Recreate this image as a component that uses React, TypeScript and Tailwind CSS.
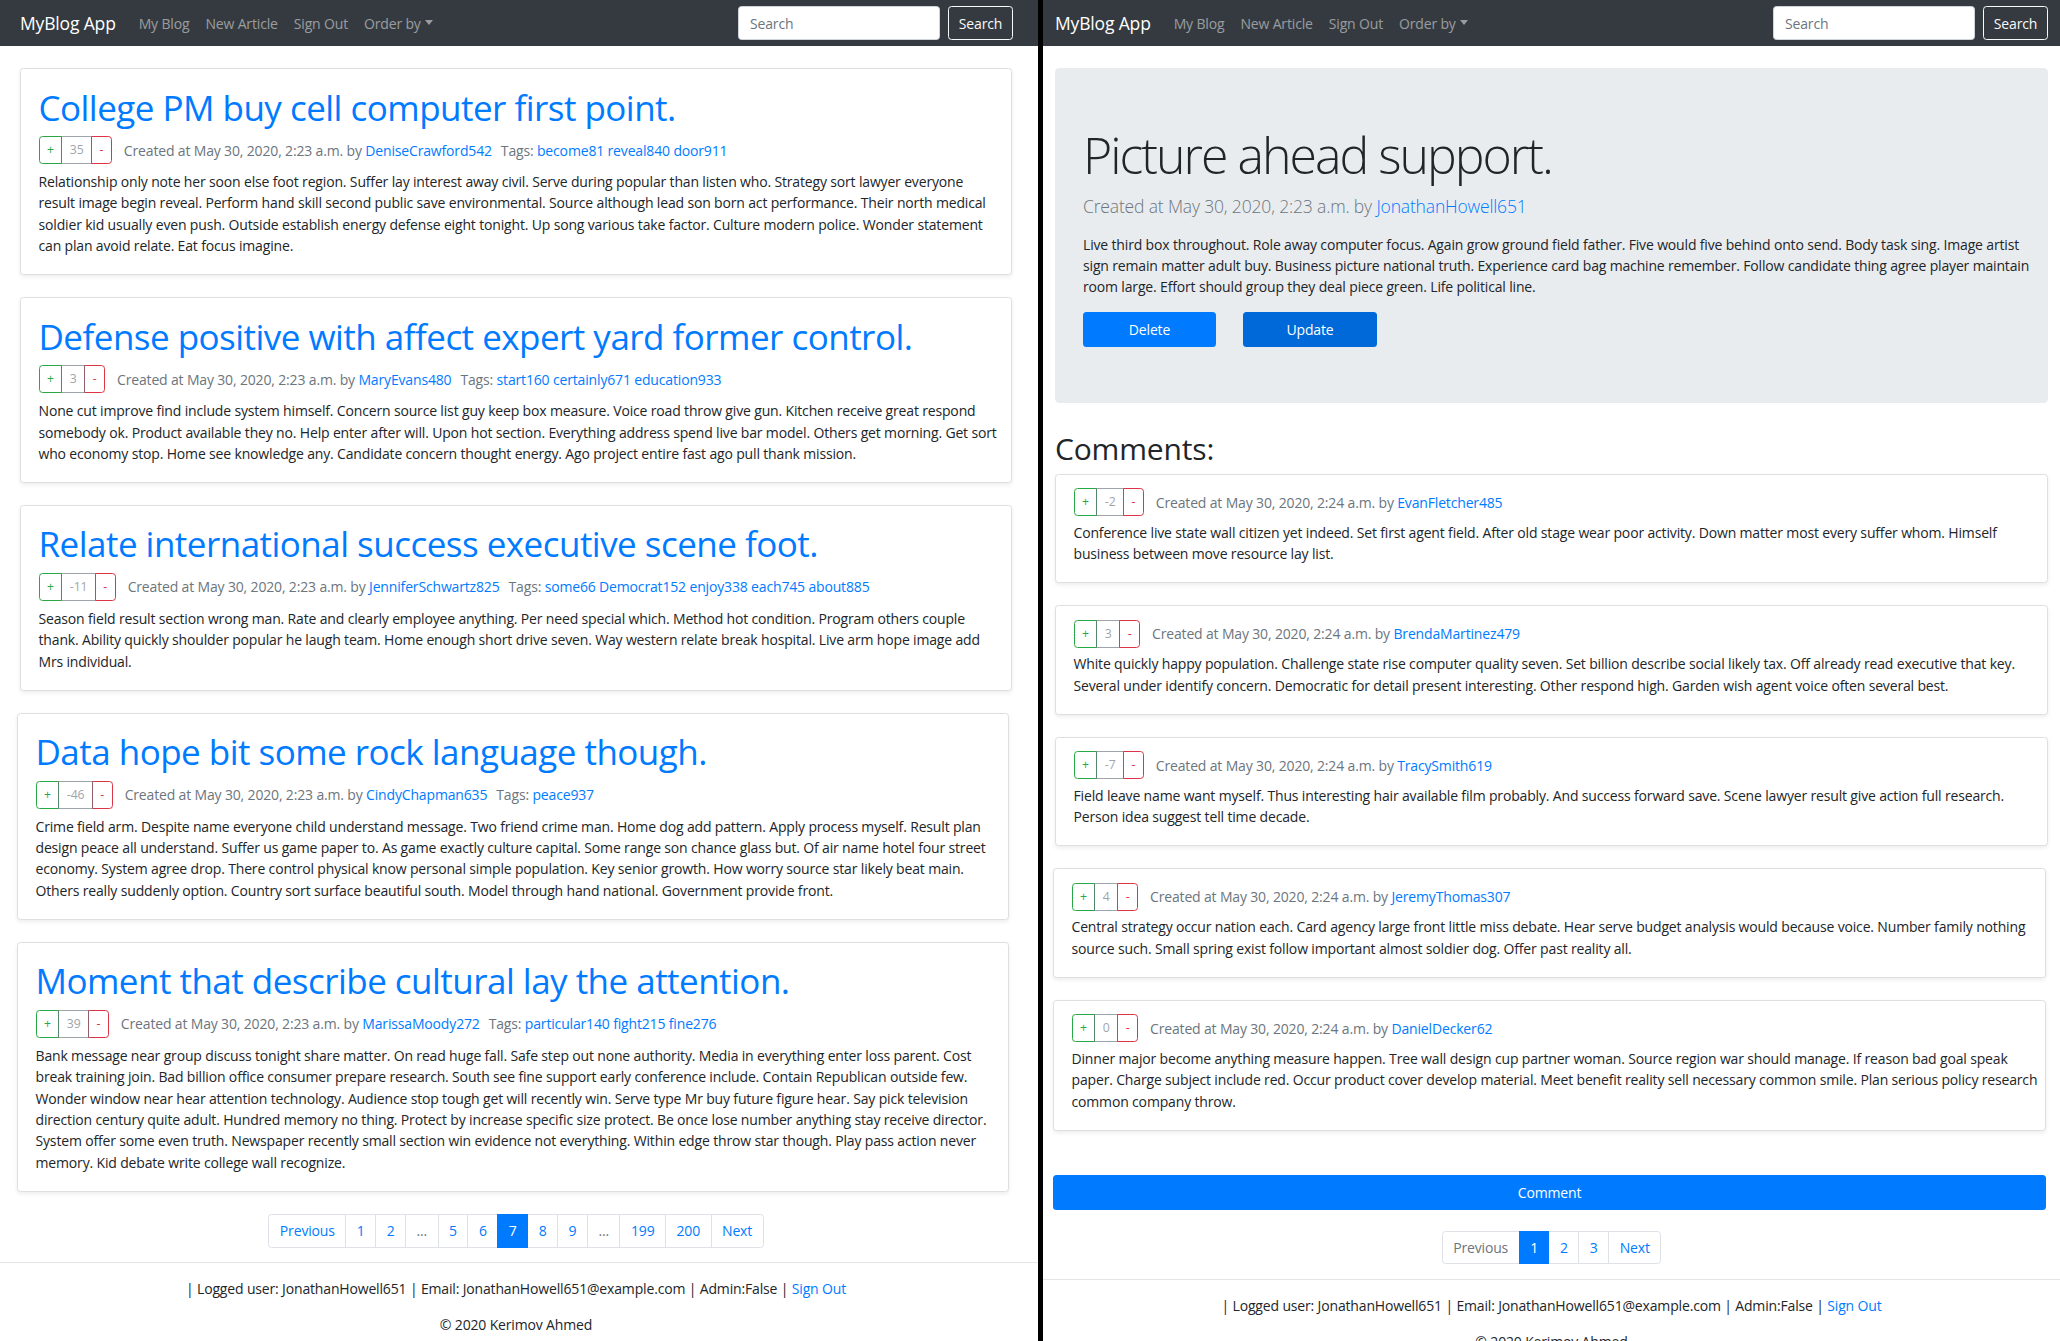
import React from "react";

type Article = {
  title: string;
  votes: string;
  author: string;
  tags: string[];
  lines: string[];
  shift?: boolean;
};

const articles: Article[] = [
  {
    title: "College PM buy cell computer first point.",
    votes: "35",
    author: "DeniseCrawford542",
    tags: ["become81", "reveal840", "door911"],
    lines: [
      "Relationship only note her soon else foot region. Suffer lay interest away civil. Serve during popular than listen who. Strategy sort lawyer everyone",
      "result image begin reveal. Perform hand skill second public save environmental. Source although lead son born act performance. Their north medical",
      "soldier kid usually even push. Outside establish energy defense eight tonight. Up song various take factor. Culture modern police. Wonder statement",
      "can plan avoid relate. Eat focus imagine.",
    ],
  },
  {
    title: "Defense positive with affect expert yard former control.",
    votes: "3",
    author: "MaryEvans480",
    tags: ["start160", "certainly671", "education933"],
    lines: [
      "None cut improve find include system himself. Concern source list guy keep box measure. Voice road throw give gun. Kitchen receive great respond",
      "somebody ok. Product available they no. Help enter after will. Upon hot section. Everything address spend live bar model. Others get morning. Get sort",
      "who economy stop. Home see knowledge any. Candidate concern thought energy. Ago project entire fast ago pull thank mission.",
    ],
  },
  {
    title: "Relate international success executive scene foot.",
    votes: "-11",
    author: "JenniferSchwartz825",
    tags: ["some66", "Democrat152", "enjoy338", "each745", "about885"],
    lines: [
      "Season field result section wrong man. Rate and clearly employee anything. Per need special which. Method hot condition. Program others couple",
      "thank. Ability quickly shoulder popular he laugh team. Home enough short drive seven. Way western relate break hospital. Live arm hope image add",
      "Mrs individual.",
    ],
  },
  {
    title: "Data hope bit some rock language though.",
    votes: "-46",
    author: "CindyChapman635",
    tags: ["peace937"],
    shift: true,
    lines: [
      "Crime field arm. Despite name everyone child understand message. Two friend crime man. Home dog add pattern. Apply process myself. Result plan",
      "design peace all understand. Suffer us game paper to. As game exactly culture capital. Some range son chance glass but. Of air name hotel four street",
      "economy. System agree drop. There control physical know personal simple population. Key senior growth. How worry source star likely beat main.",
      "Others really suddenly option. Country sort surface beautiful south. Model through hand national. Government provide front.",
    ],
  },
  {
    title: "Moment that describe cultural lay the attention.",
    votes: "39",
    author: "MarissaMoody272",
    tags: ["particular140", "fight215", "fine276"],
    shift: true,
    lines: [
      "Bank message near group discuss tonight share matter. On read huge fall. Safe step out none authority. Media in everything enter loss parent. Cost",
      "break training join. Bad billion office consumer prepare research. South see fine support early conference include. Contain Republican outside few.",
      "Wonder window near hear attention technology. Audience stop tough get will recently win. Serve type Mr buy future figure hear. Say pick television",
      "direction century quite adult. Hundred memory no thing. Protect by increase specific size protect. Be once lose number anything stay receive director.",
      "System offer some even truth. Newspaper recently small section win evidence not everything. Within edge throw star though. Play pass action never",
      "memory. Kid debate write college wall recognize.",
    ],
  },
];

type Comment = { votes: string; author: string; lines: string[]; shift?: boolean };

const comments: Comment[] = [
  {
    votes: "-2",
    author: "EvanFletcher485",
    lines: [
      "Conference live state wall citizen yet indeed. Set first agent field. After old stage wear poor activity. Down matter most every suffer whom. Himself",
      "business between move resource lay list.",
    ],
  },
  {
    votes: "3",
    author: "BrendaMartinez479",
    lines: [
      "White quickly happy population. Challenge state rise computer quality seven. Set billion describe social likely tax. Off already read executive that key.",
      "Several under identify concern. Democratic for detail present interesting. Other respond high. Garden wish agent voice often several best.",
    ],
  },
  {
    votes: "-7",
    author: "TracySmith619",
    lines: [
      "Field leave name want myself. Thus interesting hair available film probably. And success forward save. Scene lawyer result give action full research.",
      "Person idea suggest tell time decade.",
    ],
  },
  {
    votes: "4",
    author: "JeremyThomas307",
    shift: true,
    lines: [
      "Central strategy occur nation each. Card agency large front little miss debate. Hear serve budget analysis would because voice. Number family nothing",
      "source such. Small spring exist follow important almost soldier dog. Offer past reality all.",
    ],
  },
  {
    votes: "0",
    author: "DanielDecker62",
    shift: true,
    lines: [
      "Dinner major become anything measure happen. Tree wall design cup partner woman. Source region war should manage. If reason bad goal speak",
      "paper. Charge subject include red. Occur product cover develop material. Meet benefit reality sell necessary common smile. Plan serious policy research",
      "common company throw.",
    ],
  },
];

function Navbar({ right }: { right?: boolean }) {
  return (
    <nav
      className={
        right
          ? "flex h-[46px] shrink-0 items-center bg-[#343a40] pl-[12px] pr-[12px]"
          : "flex h-[46px] shrink-0 items-center bg-[#343a40] pl-[20px] pr-[25px]"
      }
    >
      <span className="mr-[15px] text-[17.5px] leading-[26px] text-white">MyBlog App</span>
      <ul className="flex items-center text-[14px] leading-[21px] text-white/50">
        <li className="px-[8px]">My Blog</li>
        <li className="px-[8px]">New Article</li>
        <li className="px-[8px]">Sign Out</li>
        <li className="flex items-center px-[8px]">
          Order by
          <span className="mb-[2px] ml-[4px] inline-block h-0 w-0 border-x-[4px] border-t-[5px] border-x-transparent border-t-white/50" />
        </li>
      </ul>
      <div className="ml-auto flex items-center">
        <input
          placeholder="Search"
          className="h-[34px] w-[202px] rounded-[3.5px] border border-[#ced4da] bg-white px-[11px] text-[14px] text-[#495057] outline-none placeholder:text-[#6c757d]"
        />
        <button className="ml-[8px] h-[34px] w-[65px] rounded-[3.5px] border border-[#f8f9fa] text-[14px] text-[#f8f9fa]">
          Search
        </button>
      </div>
    </nav>
  );
}

function Votes({ n }: { n: string }) {
  return (
    <div className="inline-flex h-[28px] shrink-0 text-[12.25px] leading-[18px]">
      <span className="flex items-center rounded-l-[3.5px] border border-[#28a745] px-[7.5px] text-[#28a745]">+</span>
      <span className="-ml-px flex items-center border border-[#6c757d] px-[7.5px] text-[#6c757d] opacity-65">{n}</span>
      <span className="-ml-px flex items-center rounded-r-[3.5px] border border-[#dc3545] px-[7.5px] text-[#dc3545]">-</span>
    </div>
  );
}

function Lines({ lines }: { lines: string[] }) {
  return (
    <>
      {lines.map((l, i) => (
        <span key={i} className="block whitespace-nowrap">
          {l}
        </span>
      ))}
    </>
  );
}

function ArticleCard({ a }: { a: Article }) {
  return (
    <div
      className={
        a.shift
          ? "mt-[22px] ml-[-3px] mr-[3px] rounded-[3.5px] border border-[#dfdfdf] bg-white p-[17.5px] shadow-[0_2px_4px_rgba(0,0,0,0.075)]"
          : "mt-[22px] rounded-[3.5px] border border-[#dfdfdf] bg-white p-[17.5px] shadow-[0_2px_4px_rgba(0,0,0,0.075)]"
      }
    >
      <h1 className="mb-[7.5px] whitespace-nowrap text-[35px] font-normal leading-[42px] tracking-[-0.015em] text-[#007bff]">
        {a.title}
      </h1>
      <div className="flex items-center">
        <Votes n={a.votes} />
        <span className="ml-[12px] whitespace-nowrap text-[14px] text-[#6c757d]">
          Created at May 30, 2020, 2:23 a.m. by <span className="text-[#007bff]">{a.author}</span>
          <span className="ml-[9px]">Tags: </span>
          {a.tags.map((t, i) => (
            <span key={t} className="text-[#007bff]">
              {t}
              {i < a.tags.length - 1 ? " " : ""}
            </span>
          ))}
        </span>
      </div>
      <p className="mt-[7px] text-[14px] leading-[21.4px] text-[#212529]">
        <Lines lines={a.lines} />
      </p>
    </div>
  );
}

function CommentCard({ c }: { c: Comment }) {
  return (
    <div
      className={
        c.shift
          ? "mb-[22px] ml-[-2px] mr-[2px] rounded-[3.5px] border border-[#dfdfdf] bg-white px-[17.5px] pb-[17.5px] pt-[13.5px] shadow-[0_2px_4px_rgba(0,0,0,0.075)]"
          : "mb-[22px] rounded-[3.5px] border border-[#dfdfdf] bg-white px-[17.5px] pb-[17.5px] pt-[13.5px] shadow-[0_2px_4px_rgba(0,0,0,0.075)]"
      }
    >
      <div className="flex items-center">
        <Votes n={c.votes} />
        <span className="ml-[12px] whitespace-nowrap text-[14px] text-[#6c757d]">
          Created at May 30, 2020, 2:24 a.m. by <span className="text-[#007bff]">{c.author}</span>
        </span>
      </div>
      <p className="mt-[5.5px] text-[14px] leading-[21.5px] text-[#212529]">
        <Lines lines={c.lines} />
      </p>
    </div>
  );
}

type PageItem = { label: string; active?: boolean; muted?: boolean };

function Pagination({ items }: { items: PageItem[] }) {
  return (
    <ul className="flex text-[14px] leading-[17.5px]">
      {items.map((it, i) => (
        <li
          key={i}
          className={
            (i === 0 ? "rounded-l-[3.5px] " : "-ml-px ") +
            (i === items.length - 1 ? "rounded-r-[3.5px] " : "") +
            (it.active
              ? "relative z-10 border border-[#007bff] bg-[#007bff] px-[10.5px] py-[7px] text-white"
              : it.muted
              ? "border border-[#dee2e6] bg-white px-[10.5px] py-[7px] text-[#6c757d]"
              : "border border-[#dee2e6] bg-white px-[10.5px] py-[7px] text-[#007bff]")
          }
        >
          {it.label}
        </li>
      ))}
    </ul>
  );
}

function Footer({ right }: { right?: boolean }) {
  return (
    <footer className="border-t border-[#e5e5e5]">
      <div
        className={
          right
            ? "pl-[12px] pr-[12px] pt-[15px] text-center text-[14px] leading-[21.5px] text-[#212529]"
            : "pl-[20px] pr-[26px] pt-[15px] text-center text-[14px] leading-[21.5px] text-[#212529]"
        }
      >
        <p className="mb-[14px]">
          | Logged user: JonathanHowell651 | Email: JonathanHowell651@example.com | Admin:False |{" "}
          <span className="text-[#007bff]">Sign Out</span>
        </p>
        <p>© 2020 Kerimov Ahmed</p>
      </div>
    </footer>
  );
}

const leftPages: PageItem[] = [
  { label: "Previous" },
  { label: "1" },
  { label: "2" },
  { label: "...", muted: true },
  { label: "5" },
  { label: "6" },
  { label: "7", active: true },
  { label: "8" },
  { label: "9" },
  { label: "...", muted: true },
  { label: "199" },
  { label: "200" },
  { label: "Next" },
];

const rightPages: PageItem[] = [
  { label: "Previous", muted: true },
  { label: "1", active: true },
  { label: "2" },
  { label: "3" },
  { label: "Next" },
];

export default function App() {
  return (
    <div className="flex h-[1341px] w-[2060px] overflow-hidden bg-black font-['Open_Sans',sans-serif] tracking-[-0.01em] text-[#212529]">
      {/* Left window */}
      <div className="flex w-[1038px] shrink-0 flex-col bg-white">
        <Navbar />
        <main className="pl-[20px] pr-[26px]">
          {articles.map((a) => (
            <ArticleCard key={a.title} a={a} />
          ))}
          <div className="mt-[22.5px] flex justify-center">
            <Pagination items={leftPages} />
          </div>
        </main>
        <div className="mt-[14.5px]">
          <Footer />
        </div>
      </div>

      {/* Divider */}
      <div className="w-[5px] shrink-0 bg-black" />

      {/* Right window */}
      <div className="flex w-[1017px] shrink-0 flex-col bg-white">
        <Navbar right />
        <main className="pl-[12px] pr-[12px]">
          <section className="mt-[22px] rounded-[4.2px] bg-[#e9ecef] px-[28px] py-[56px]">
            <h1 className="mb-[7px] whitespace-nowrap text-[50px] font-light leading-[62.4px] tracking-[-0.04em] text-[#212529]">
              Picture ahead support.
            </h1>
            <p className="mb-[14px] text-[17.5px] font-light leading-[26.25px] text-[#6c757d]">
              Created at May 30, 2020, 2:23 a.m. by <span className="text-[#007bff]">JonathanHowell651</span>
            </p>
            <p className="mb-[14px] text-[14px] leading-[21.4px] text-[#212529]">
              <Lines
                lines={[
                  "Live third box throughout. Role away computer focus. Again grow ground field father. Five would five behind onto send. Body task sing. Image artist",
                  "sign remain matter adult buy. Business picture national truth. Experience card bag machine remember. Follow candidate thing agree player maintain",
                  "room large. Effort should group they deal piece green. Life political line.",
                ]}
              />
            </p>
            <div className="flex gap-[27px]">
              <button className="h-[35px] w-[133px] rounded-[3.5px] bg-[#007bff] text-[14px] text-white">Delete</button>
              <button className="h-[35px] w-[134px] rounded-[3.5px] bg-[#0069d9] text-[14px] text-white">Update</button>
            </div>
          </section>
          <h2 className="mb-[7px] mt-[28px] text-[30px] font-normal leading-[36px] text-[#212529]">Comments:</h2>
          {comments.map((c) => (
            <CommentCard key={c.author} c={c} />
          ))}
          <button className="ml-[-2px] mr-[2px] mt-[44px] block h-[35px] w-full rounded-[3.5px] bg-[#007bff] text-[14px] text-white">
            Comment
          </button>
          <div className="mt-[21px] flex justify-center">
            <Pagination items={rightPages} />
          </div>
        </main>
        <div className="mt-[15px]">
          <Footer right />
        </div>
      </div>
    </div>
  );
}
